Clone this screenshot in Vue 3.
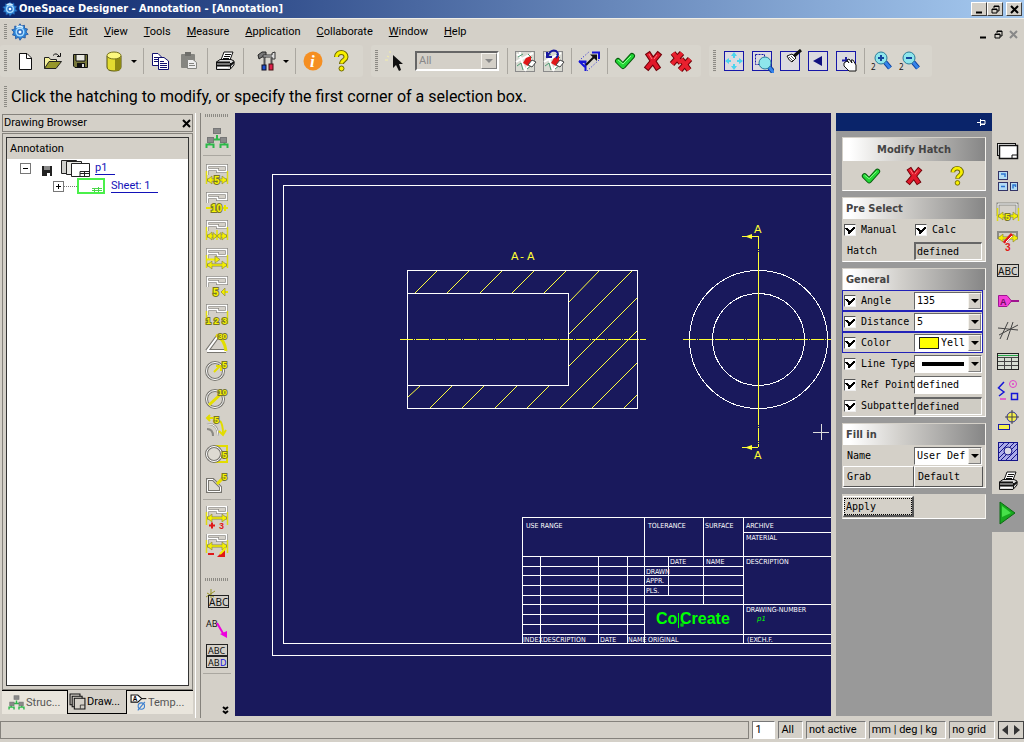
<script setup>
import { ref } from 'vue'

const dimBase = '<path d="M2.500 13V3.500H21.500V9.500H12.500V7.500H2.500" fill="none" stroke="#8b8983" stroke-width="3"/><path d="M2.500 13V3.500H21.500V9.500H12.500V7.500H2.500" fill="none" stroke="#fff" stroke-width="1.500"/>'
const arrows = (y) => `<path d="M2 ${y}H22" stroke="#8f8c3c" stroke-width="3"/><path d="M2 ${y}L7 ${y - 4}V${y + 4}ZM22 ${y}L17 ${y - 4}V${y + 4}Z" fill="#f4f000" stroke="#8f8c3c" stroke-width="0.700"/><path d="M3 ${y}H21" stroke="#f4f000" stroke-width="1.500"/>`
const posts = '<path d="M1.500 9V22M22.500 9V22" stroke="#dedb10" stroke-width="1.500"/>'
const num = (x, y, t, size = 10, fill = '#f8f400', edge = '#77752a') =>
  `<text x="${x}" y="${y}" font-family="Liberation Sans, sans-serif" font-weight="bold" font-size="${size}" fill="${fill}" stroke="${edge}" stroke-width="2" paint-order="stroke">${t}</text>`
const abc = (x, y, t, fill = '#111', size = 10) =>
  `<text x="${x}" y="${y}" font-family="Noto Sans, sans-serif" font-size="${size}" fill="${fill}">${t}</text>`

const treeIcon = '<path d="M12 9V13M4.500 18V13.500H19.500V18M1.500 22V18.500H8.500V22M15.500 22V18.500H22.500V22" fill="none" stroke="#2db84a" stroke-width="2"/><g fill="#8a8a8a" stroke="#777"><rect x="8.500" y="2.500" width="7" height="5"/><rect x="2.500" y="11.500" width="6" height="5"/><rect x="15.500" y="11.500" width="6" height="5"/></g>'
const checkIcon = '<path d="M5 12L10 17L19 7" fill="none" stroke="#075a0c" stroke-width="6" stroke-linecap="round" stroke-linejoin="round"/><path d="M5 12L10 17L19 7" fill="none" stroke="#22d636" stroke-width="4" stroke-linecap="round" stroke-linejoin="round"/><path d="M5 11L10 15L18 7" fill="none" stroke="#8dff8d" stroke-width="1"/>'
const crossIcon = '<path d="M8 6L16 18M17 6L7 18" stroke="#6e0008" stroke-width="6" stroke-linecap="square"/><path d="M8 6L16 18M17 6L7 18" stroke="#e0182a" stroke-width="4" stroke-linecap="square"/><path d="M8 5L11 10M16 6L13 10" stroke="#ff7a80"/>'
const helpIcon = '<path d="M7.500 8C7.500 2 17 2 17 8C17 11.500 12.500 11 12.500 15" fill="none" stroke="#6e6800" stroke-width="5"/><circle cx="12.500" cy="19.500" r="2.500" fill="#f8f000" stroke="#6e6800"/><path d="M7.500 8C7.500 2 17 2 17 8C17 11.500 12.500 11 12.500 14.500" fill="none" stroke="#f8f000" stroke-width="3"/>'
const printIcon = '<path d="M8 11L11 3H20L17 11Z" fill="#fff" stroke="#111"/><path d="M12 5.500H18M11 7.500H17M10 9.500H16" stroke="#111"/><path d="M3.500 13L7 10.500H18L21 12V16L17 20.500H3.500Z" fill="#ddd" stroke="#111"/><path d="M3 13.500H17M3 16.500H17L21 13" fill="none" stroke="#111" stroke-width="2"/><path d="M5 18.500H15" stroke="#fff"/><path d="M17.500 14V20" stroke="#111"/>'
const gearIcon = '<path d="M12 1L14 4L18 3L18 7L22 8L20 12L23 15L19 16L19 20L15 19L12 23L10 19L6 21L6 17L2 16L4 12L1 9L5 8L5 4L9 5Z" fill="#2e86d8" stroke="#1b4f9c"/><circle cx="12" cy="12" r="6" fill="#a8dcff"/><circle cx="12" cy="12" r="4" fill="#2b6fc4"/><circle cx="12" cy="12" r="2" fill="#fff"/><path d="M7 6Q11 3 16 6" fill="none" stroke="#d8f2ff" stroke-width="2"/>'
const mapBase = '<rect x="2.500" y="2.500" width="19" height="20" fill="#d9dad2" stroke="#8a8a8a"/><path d="M3 13L8 10L12 21M4 5L9 10L20 4M14 16H21M7 3V8M12 22L17 13" fill="none" stroke="#fff" stroke-width="2"/><path d="M5 8L10 5M4 17L8 14L10 21M15 5L19 9M14 20L19 16" fill="none" stroke="#4c9a72"/><path d="M10 14L13 9L18 7V12L15 17Z" fill="#e01818"/><path d="M15 16L19 11L23 13L19 18Z" fill="#fff" stroke="#444"/>'
const boxIcon = '<rect x="2.500" y="2.500" width="19" height="19" fill="#dcdbe0" stroke="#1616a8"/>'
const magnifier = (x, y) => `<path d="M${x + 4} ${y + 4}L${x + 9} ${y + 10}" stroke="#0c3f9c" stroke-width="5"/><path d="M${x + 4} ${y + 4}L${x + 9} ${y + 10}" stroke="#3584ea" stroke-width="3"/><circle cx="${x}" cy="${y}" r="6" fill="#8ee6ec" stroke="#2b7c9a"/>`

const icons = {
  gear: gearIcon, tree: treeIcon, check: checkIcon, cross: crossIcon, help: helpIcon, print: printIcon,
  newFile: '<path d="M6.500 4.500H14L18.500 9V20.500H6.500Z" fill="#fff" stroke="#111"/><path d="M13.500 4.500V9.500H18.500" fill="none" stroke="#111"/>',
  open: '<path d="M3.500 19.500V8.500H8L9.500 10.500H15.500V13" fill="#f5f19a" stroke="#222"/><path d="M3.500 19.500L8 12.500H20.500L15 19.500Z" fill="#96962a" stroke="#222"/><path d="M12 6.500Q15 3 18 7M19.500 4V7.500H16" fill="none" stroke="#111"/>',
  save: '<path d="M4.500 5.500H18.500V18.500H6L4.500 17Z" fill="#77773a" stroke="#111"/><path d="M7 5.500H16V12H7Z" fill="#e8e8e0" stroke="#111"/><path d="M8 14H16V19H8Z" fill="#111"/><path d="M13 15H15V18H13Z" fill="#ddd"/>',
  database: '<path d="M5 7V18Q5 22 12 22Q19 22 19 18V7Z" fill="#e2dc30" stroke="#55520c"/><path d="M13 9H19V18Q19 22 13 22Z" fill="#8e8a12"/><ellipse cx="12" cy="6.500" rx="7" ry="3.500" fill="#fbf77e" stroke="#77721c"/>',
  copy: '<path d="M3.500 4.500H9L12.500 8V16.500H3.500Z" fill="#fff" stroke="#111170"/><path d="M5 8.500H10M5 10.500H10M5 12.500H10" stroke="#111170"/><path d="M9.500 8.500H15L19.500 12V20.500H9.500Z" fill="#fff" stroke="#111170"/><path d="M11 12.500H15M11 14.500H18M11 16.500H18M11 18.500H18" stroke="#111170"/>',
  paste: '<rect x="4" y="5" width="14" height="14" rx="1" fill="#858580"/><rect x="8" y="3" width="6" height="4" fill="#6e6e6a"/><path d="M10.500 10.500H16L19.500 13.500V19.500H10.500Z" fill="#eee" stroke="#858580"/><path d="M12 14.500H17M12 16.500H18" stroke="#858580"/>',
  tools: '<path d="M4 6L8 3H12V8H8L5 10Z" fill="#777" stroke="#222"/><path d="M9 6H18V4L21 3V10H18V8H9Z" fill="#ddd" stroke="#333"/><path d="M10.500 8V16M17.500 9V15" stroke="#555" stroke-width="2"/><rect x="8" y="16" width="4" height="5" fill="#1d4fd0" stroke="#112"/><rect x="15" y="15" width="4" height="6" fill="#dd204c" stroke="#411"/>',
  info: '<circle cx="12" cy="12" r="9.500" fill="#f58f22"/><text x="9" y="18" font-family="Liberation Serif, serif" font-size="17" font-style="italic" font-weight="bold" fill="#fff">i</text>',
  cursor: '<path d="M9 6V19L12 16L15 22L17 21L15 15H19Z" fill="#111"/><path d="M3 7L5 8M6 2V4M1 11H4" stroke="#f4efaa"/>',
  mapRed: mapBase,
  mapUndo: mapBase + '<path d="M6 3V8H11M6.500 7Q10 0 15 2Q19 5 15 9" fill="none" stroke="#1818a0" stroke-width="2"/>',
  stretch: '<path d="M2 12.500H8.500V22M8 13L3 13M15 3.500H22V10" fill="none" stroke="#1515d8" stroke-width="2"/><path d="M2 12L8 18" stroke="#1515d8" stroke-width="2"/><path d="M9 16L18 7" stroke="#111" stroke-width="2"/><path d="M13 5.500H20V12Z" fill="#111"/><path d="M4 10L13 2M10 22L22 11" stroke="#1515d8" stroke-dasharray="1 2"/>',
  doubleCross: '<path d="M4 4L12 14M13 4L3 15M12 10L20 21M21 10L11 21" stroke="#6e0008" stroke-width="6"/><path d="M4 4L12 14M13 4L3 15M12 10L20 21M21 10L11 21" stroke="#e8202e" stroke-width="4"/>',
  fit: boxIcon + '<path d="M12 3L15 7H13V9H11V7H9ZM12 21L9 17H11V15H13V17H15ZM3 12L7 9V11H9V13H7V15ZM21 12L17 15V13H15V11H17V9Z" fill="#4cd4ee"/>',
  zoomBox: boxIcon + '<rect x="5.500" y="5.500" width="9" height="10" fill="none" stroke="#1616a8" stroke-dasharray="2 1"/>' + magnifier(15, 14),
  brush: boxIcon + '<path d="M23 1L15 8" stroke="#111" stroke-width="3"/><path d="M9 7L14 5L18 9L14 13Q11 12 9 7Z" fill="#fff" stroke="#111"/><path d="M11 8L15 12M13 7L16 10" stroke="#555"/>',
  previous: boxIcon + '<path d="M7 12L16 7V17Z" fill="#101080"/>',
  pan: boxIcon + '<path d="M8 11.500H16M12 8V16" stroke="#2020a0" stroke-width="2"/><path d="M10 14L13 12L15 14L13 11L15 10L18 14L17 11L19 11L22 16V22H15L10 17Z" fill="#fff" stroke="#111"/>',
  zoomIn: magnifier(11, 9) + '<path d="M8 9H14M11 6V12" stroke="#14449c" stroke-width="2"/>' + abc(1, 21, '2', '#111', 8),
  zoomOut: magnifier(11, 9) + '<path d="M8 9H14" stroke="#14449c" stroke-width="2"/>' + abc(1, 21, '2', '#111', 8),
  dim5: dimBase + posts + arrows(18) + num(9, 22, '5'),
  dim10: dimBase + '<path d="M1 18H7M18 18H23M20 15V21" stroke="#e8e400" stroke-width="2"/>' + num(6, 22, '10'),
  dimChain: dimBase + posts + arrows(18) + '<path d="M12 12V22" stroke="#e8e400" stroke-width="1.500"/><path d="M12 18L8 14.500V21.500ZM12 18L16 14.500V21.500Z" fill="#f4f000" stroke="#8f8c3c" stroke-width="0.700"/>',
  dimBaseLine: dimBase + posts + arrows(19) + '<path d="M2 13.500H13" stroke="#f4f000" stroke-width="2"/><path d="M15 13.500L10 10V17Z" fill="#f4f000" stroke="#8f8c3c" stroke-width="0.700"/>',
  dim5s: dimBase + '<path d="M16 18H23" stroke="#e8e400" stroke-width="2"/><path d="M16 18L20 14V22Z" fill="#f4f000" stroke="#8f8c3c" stroke-width="0.700"/>' + num(8, 22, '5'),
  dim123: dimBase + posts + num(1, 22, '1', 9) + num(9, 22, '2', 9) + num(17, 22, '3', 9),
  angle: '<path d="M2 21H21M2 21L13 6" stroke="#77756f" stroke-width="4"/><path d="M2 21H21M2 21L13 6" stroke="#fff" stroke-width="2"/><path d="M11 5Q20 10 21 21" fill="none" stroke="#e2de00" stroke-width="3"/>' + num(13, 9, '30', 8),
  radius: '<circle cx="10" cy="13" r="8.500" fill="none" stroke="#77756f" stroke-width="3"/><circle cx="10" cy="13" r="8.500" fill="none" stroke="#fff"/><path d="M9 14L15 8M11 8H16V13" stroke="#e5df00" stroke-width="2" fill="none"/>' + num(17, 10, '5', 9),
  diameter: '<circle cx="10" cy="13" r="8.500" fill="none" stroke="#77756f" stroke-width="3"/><circle cx="10" cy="13" r="8.500" fill="none" stroke="#fff"/><path d="M4 19L17 7" stroke="#e5df00" stroke-width="3"/>' + num(13, 9, '10', 8),
  arcDim: '<path d="M2 10Q13 9 13 22M2 15Q8 15 8 22" fill="none" stroke="#8b8983" stroke-width="2"/><path d="M2 10Q13 9 13 22" fill="none" stroke="#fff"/><path d="M2 4H8M5 1L2 4L5 7M15 7Q18 10 18 20M14 17L18 21L21 16" fill="none" stroke="#e2dc00" stroke-width="2"/>' + num(9, 9, '5', 9),
  tangent: '<path d="M8 4H22V20H8" fill="none" stroke="#e2dc00" stroke-width="2"/><circle cx="9" cy="12" r="7.500" fill="#dedbd2" stroke="#77756f" stroke-width="3"/><circle cx="9" cy="12" r="7.500" fill="none" stroke="#fff"/>' + num(17, 16, '5', 9),
  chamfer: '<path d="M2.500 9.500H8L15.500 17V21.500H2.500Z" fill="#dcd9d1" stroke="#77756f" stroke-width="3"/><path d="M2.500 9.500H8L15.500 17V21.500H2.500Z" fill="none" stroke="#fff"/><path d="M12 14L18 8" stroke="#e5df00" stroke-width="3"/>' + num(17, 10, '5', 9),
  dimPlus: '<g transform="translate(0 -3)">' + dimBase + posts + arrows(15) + '</g><path d="M4 19.500H10M7 16.500V22.500" stroke="#e01818" stroke-width="2"/>' + num(14, 23, '3', 9, '#e01818', '#d4d0c8'),
  dimMinus: '<g transform="translate(0 -3)">' + dimBase + posts + arrows(15) + '</g><path d="M3 20H9" stroke="#e01818" stroke-width="2"/><path d="M12 23L20 15V23Z" fill="#e01818"/><path d="M15 20L21 14" stroke="#f4f000" stroke-width="2"/>',
  abcNew: '<path d="M2 5L9 9M6 1V10M1 9L10 3" stroke="#99952a"/><rect x="3.500" y="7.500" width="20" height="12" fill="none" stroke="#222"/>' + abc(4, 18, 'ABC'),
  abArrow: abc(1, 11, 'AB', '#111', 9) + '<path d="M12 7L19 19" stroke="#ee00dd" stroke-width="2"/><path d="M15 18L22 15V22Z" fill="#ee00dd"/>',
  abcAbd: '<g fill="none" stroke="#222"><rect x="1.500" y="0.500" width="21" height="11"/><rect x="1.500" y="12.500" width="21" height="11"/></g>' + abc(3, 10, 'ABC', '#111', 9) + abc(3, 22, 'AB', '#111', 9) + abc(15, 22, 'D', '#1515e0', 9),
  sheets: '<rect x="1.500" y="4.500" width="18" height="12" fill="#fff" stroke="#111"/><path d="M3.500 6.500H21.500V19.500H3.500Z" fill="#fff" stroke="#111" stroke-width="1.500"/><path d="M16 19V16H21" fill="none" stroke="#111"/>',
  views: '<g fill="#b4dcf4" stroke="#333366"><rect x="2.500" y="2.500" width="9" height="8"/><rect x="2.500" y="13.500" width="9" height="8"/><rect x="14.500" y="13.500" width="7" height="8"/></g><path d="M5 5H9V8M5 17.500H9M17 19.500V16H19.500V18" fill="none" stroke="#2c74d0" stroke-width="1.500"/>',
  rowDim: '<path d="M2 17V5H21V17" fill="none" stroke="#8b8b86" stroke-width="3"/><path d="M2 17V5H21V17" fill="none" stroke="#fff"/>' + posts + arrows(17) + num(9, 21, '5', 9),
  rowDimEdit: '<path d="M2 10V3H21V10" fill="none" stroke="#8b8b86" stroke-width="2"/>' + arrows(9) + '<path d="M8 14L16 5" stroke="#e01818" stroke-width="3"/><path d="M10 13L16 7" stroke="#fff"/>' + num(9, 22, '3', 10, '#e01818', '#d4d0c8'),
  abc: '<rect x="1.500" y="5.500" width="21" height="12" fill="none" stroke="#222"/>' + abc(2, 16, 'ABC'),
  datum: '<path d="M2.500 6.500H11L15.500 12L11 17.500H2.500Z" fill="#f33fd8" stroke="#a01490"/><path d="M15 12H23" stroke="#a01490" stroke-width="2"/>' + num(4, 16, 'A', 9, '#701060', '#f33fd8'),
  lines: '<path d="M2 9L22 11M11 21L17 3M3 16L22 6M4 20L12 3" stroke="#444"/>',
  table: '<rect x="1.500" y="4.500" width="21" height="16" fill="#d7ddd3" stroke="#222"/><path d="M2 8.500H22M2 12.500H22M2 16.500H22M8.500 9V20M15.500 9V20" stroke="#444"/><path d="M2 6.500H22" stroke="#27a74a" stroke-width="1"/>',
  sketch: '<path d="M8 3L2.500 9L8 13L3 17" fill="none" stroke="#1616d8" stroke-width="1.500"/><circle cx="17" cy="5" r="3.500" fill="none" stroke="#e044c8"/><circle cx="17" cy="5" r="1" fill="#e044c8"/><rect x="15.500" y="14.500" width="6" height="6" fill="none" stroke="#1616d8" stroke-width="1.500"/><path d="M4 20H10" stroke="#e044c8" stroke-width="1.500"/>',
  target: '<circle cx="16" cy="8" r="5" fill="#f4ef4c" stroke="#2828a0"/><path d="M16 1V15M9 8H23" stroke="#444"/><rect x="2.500" y="15.500" width="11" height="5" fill="#f4ef4c" stroke="#1c1ca8"/>',
  hatch: '<rect x="2.500" y="3.500" width="19" height="18" fill="#aaaae8" stroke="#14148a"/><path d="M3 9L8 4M3 14L13 4M3 19L18 4M5 21L21 5M10 21L21 10M15 21L21 15" stroke="#14148a"/><circle cx="12" cy="12" r="4" fill="#d9d7e5" stroke="#14148a"/>',
  play: '<path d="M4 1L19 12L4 23Z" fill="#17a81e" stroke="#0b6b12"/><path d="M6 5L15 12L6 16Z" fill="#47e04a"/>',
  tabSheets: '<g fill="#d4d0c8" stroke="#111" stroke-width="1.500"><path d="M1.500 1.500H15.500V16.500H1.500Z"/><path d="M4.500 4.500H18.500V19.500H4.500Z"/><path d="M7.500 7.500H22.500V22.500H7.500Z"/></g><path d="M16 22V17H22" stroke="#111" fill="none"/>',
  tabTemplate: '<path d="M1.500 1.500H11L16.500 6.500L11 11.500H1.500Z" fill="#fff" stroke="#111" stroke-width="1.500"/><path d="M16 6.500H23" stroke="#111" stroke-width="1.500"/><text x="4" y="10" font-family="Liberation Sans, sans-serif" font-weight="bold" font-size="9">A</text><circle cx="16" cy="17" r="4.500" fill="none" stroke="#3a7fd0" stroke-width="1.500"/><path d="M11 23L21 11" stroke="#3a7fd0" stroke-width="1.500"/>'
}

const menus = ['File', 'Edit', 'View', 'Tools', 'Measure', 'Application', 'Collaborate', 'Window', 'Help']
const fileTools = [
  { icon: 'newFile', label: 'New' }, { icon: 'open', label: 'Open' }, { icon: 'save', label: 'Save' },
  { icon: 'database', label: 'Database', drop: true }, null,
  { icon: 'copy', label: 'Copy' }, { icon: 'paste', label: 'Paste' }, null,
  { icon: 'print', label: 'Print' }, null, { icon: 'tools', label: 'Options', drop: true }, null,
  { icon: 'info', label: 'Information' }, { icon: 'help', label: 'Help' }
]
const editTools = [
  null, { icon: 'mapRed', label: 'Erase' }, { icon: 'mapUndo', label: 'Undo' }, null,
  { icon: 'stretch', label: 'Stretch' }, null, { icon: 'check', label: 'Accept' },
  { icon: 'cross', label: 'Cancel' }, { icon: 'doubleCross', label: 'Cancel all' }
]
const viewTools = [
  { icon: 'fit', label: 'Fit' }, { icon: 'zoomBox', label: 'Zoom window' }, { icon: 'brush', label: 'Redraw' },
  { icon: 'previous', label: 'Previous view' }, { icon: 'pan', label: 'Pan' }, null,
  { icon: 'zoomIn', label: 'Zoom in' }, { icon: 'zoomOut', label: 'Zoom out' }
]
const sideTop = ['tree', null, 'dim5', 'dim10', 'dimChain', 'dimBaseLine', 'dim5s', 'dim123', 'angle', 'radius', 'diameter', 'arcDim', 'tangent', 'chamfer', null, 'dimPlus', 'dimMinus']
const sideBottom = ['abcNew', 'abArrow', 'abcAbd', null]
const railTools = ['sheets', 'views', 'rowDim', 'rowDimEdit', 'abc', 'datum', 'lines', 'table', 'sketch', 'target', 'hatch', 'print', 'play']
const general = [
  { id: 'angle', label: 'Angle', value: '135', kind: 'combo', hot: true },
  { id: 'distance', label: 'Distance', value: '5', kind: 'combo', hot: true },
  { id: 'color', label: 'Color', value: 'Yell', kind: 'combo', swatch: true, hot: true },
  { id: 'linetype', label: 'Line Type', value: '', kind: 'combo', line: true },
  { id: 'refpoint', label: 'Ref Point', value: 'defined', kind: 'text' },
  { id: 'subpattern', label: 'Subpattern', value: 'defined', kind: 'flat' }
]
const checks = ref(Object.fromEntries(general.map((g) => [g.id, true])))
const manual = ref(true)
const calc = ref(true)

const hatchTop = [[415, 437], [447, 469], [480, 502], [512, 534], [544, 566]]
const hatchBottom = [[430, 452], [462, 484], [495, 517], [527, 549]]
const hatchLines = [
  ...hatchTop.map(([a, b]) => [a, 293, b, 271]),
  ...hatchBottom.map(([a, b]) => [a, 408, b, 386]),
  [569, 302, 599, 271], [569, 334, 632, 271], [569, 366, 637, 298], [560, 408, 637, 331],
  [592, 408, 637, 363], [624, 408, 637, 395], [408, 397, 420, 386]
]
const blockText = [
  [526, 528, 'USE RANGE'], [648, 528, 'TOLERANCE'], [705, 528, 'SURFACE'], [746, 528, 'ARCHIVE'], [746, 540, 'MATERIAL'],
  [670, 564, 'DATE'], [706, 564, 'NAME'], [746, 564, 'DESCRIPTION'], [646, 574, 'DRAWN'], [646, 583, 'APPR.'], [646, 593, 'PLS.'],
  [746, 612, 'DRAWING-NUMBER'], [523, 642, 'INDEX'], [543, 642, 'DESCRIPTION'], [600, 642, 'DATE'], [628, 642, 'NAME'],
  [648, 642, 'ORIGINAL'], [747, 642, '(EXCH.F.']
]
const status = ['All', 'not active', 'mm | deg | kg', 'no grid']
</script>

<template>
  <div class="app">
    <header class="title">
      <svg class="ic16" viewBox="0 0 24 24" v-html="icons.gear"></svg>
      <h1>OneSpace Designer - Annotation - [Annotation]</h1>
      <div class="winbtns">
        <button aria-label="Minimize"><svg width="9" height="9"><path d="M1 7.500H7" stroke="#000" stroke-width="2" /></svg></button>
        <button aria-label="Restore"><svg width="9" height="9"><path d="M3 3V1H8V6H6M1 4H6V8H1ZM3 1.500H8M1 4.500H6" fill="none" stroke="#000" /></svg></button>
        <button class="close" aria-label="Close"><svg width="9" height="9"><path d="M1 1L8 8M8 1L1 8" stroke="#000" stroke-width="2" /></svg></button>
      </div>
    </header>

    <nav class="menu">
      <span class="grip"></span>
      <svg class="ic18" viewBox="0 0 24 24" v-html="icons.gear"></svg>
      <button v-for="m in menus" :key="m"><u>{{ m[0] }}</u>{{ m.slice(1) }}</button>
      <div class="docbtns">
        <button aria-label="Minimize document"><svg width="9" height="9"><path d="M1 7.500H7" stroke="#000" stroke-width="2" /></svg></button>
        <button aria-label="Restore document"><svg width="9" height="9"><path d="M3 3V1H8V6H6M1 4H6V8H1ZM3 1.500H8M1 4.500H6" fill="none" stroke="#000" /></svg></button>
        <button aria-label="Close document"><svg width="9" height="9"><path d="M1 1L8 8M8 1L1 8" stroke="#888" stroke-width="2" /></svg></button>
      </div>
    </nav>

    <div class="tools">
      <div class="bar">
        <span class="grip"></span>
        <template v-for="(t, i) in fileTools" :key="i">
          <button v-if="t" class="tool" :class="{ drop: t.drop }" :aria-label="t.label">
            <svg viewBox="0 0 24 24" v-html="icons[t.icon]"></svg><i v-if="t.drop" class="tri"></i>
          </button>
          <span v-else class="sep"></span>
        </template>
      </div>
      <div class="bar second">
        <span class="grip"></span>
        <button class="tool" aria-label="Select"><svg viewBox="0 0 24 24" v-html="icons.cursor"></svg></button>
        <div class="combo filter">
          <select aria-label="Selection filter" disabled><option>All</option></select>
          <span class="arrow"><i class="tri"></i></span>
        </div>
        <template v-for="(t, i) in editTools" :key="i">
          <button v-if="t" class="tool" :aria-label="t.label"><svg viewBox="0 0 24 24" v-html="icons[t.icon]"></svg></button>
          <span v-else class="sep"></span>
        </template>
      </div>
      <div class="bar">
        <span class="grip"></span>
        <template v-for="(t, i) in viewTools" :key="i">
          <button v-if="t" class="tool" :aria-label="t.label"><svg viewBox="0 0 24 24" v-html="icons[t.icon]"></svg></button>
          <span v-else class="sep"></span>
        </template>
      </div>
    </div>

    <div class="prompt"><span class="grip"></span><p>Click the hatching to modify, or specify the first corner of a selection box.</p></div>

    <main class="work">
      <aside class="browser">
        <div class="bhead"><h2>Drawing Browser</h2><button aria-label="Close browser"><svg width="9" height="9"><path d="M1 1L8 8M8 1L1 8" stroke="#000" stroke-width="2" /></svg></button></div>
        <div class="bframe">
          <div class="tree">
            <div class="thead">Annotation</div>
            <div class="trow">
              <button class="node" aria-label="Collapse">
                <svg width="11" height="11"><rect x="0.500" y="0.500" width="10" height="10" fill="#fff" stroke="#777" /><path d="M3 5.500H8" stroke="#000" /></svg>
              </button>
              <svg class="disk" width="10" height="10"><path d="M0 0H10V10H0Z" fill="#222" /><path d="M2 0H8V4H2Z" fill="#888" /><path d="M5 7H8V10H5Z" fill="#fff" /></svg>
              <svg class="stack" width="32" height="18"><g fill="#d0d0cc" stroke="#222"><path d="M1.500 1.500H16.500V14.500H1.500Z" /><path d="M6.500 2.500H21.500V15.500H6.500Z" fill="#e8e8e4" /><path d="M11.500 4.500H29.500V17.500H11.500Z" fill="#fff" /></g><path d="M20 17V12.500H29M20 14.500H29M24.500 12V17" stroke="#222" fill="none" /></svg>
              <a href="#p1">p1</a>
            </div>
            <div class="trow child">
              <button class="node" aria-label="Expand">
                <svg width="11" height="11"><rect x="0.500" y="0.500" width="10" height="10" fill="#fff" stroke="#777" /><path d="M3 5.500H8M5.500 3V8" stroke="#000" /></svg>
              </button>
              <i class="dots"></i>
              <svg width="28" height="17"><rect x="1" y="1" width="26" height="14" fill="#fff" stroke="#4af04a" stroke-width="2" /><path d="M15 12.500H25M15 10.500H25M17.500 10V14M21.500 9V14" stroke="#4ad84a" /></svg>
              <a href="#sheet1">Sheet: 1</a>
            </div>
          </div>
        </div>
        <div class="tabs">
          <button><svg viewBox="0 0 24 24" v-html="icons.tree"></svg>Struc...</button>
          <button class="on"><svg viewBox="0 0 24 24" v-html="icons.tabSheets"></svg>Draw...</button>
          <button><svg viewBox="0 0 24 24" v-html="icons.tabTemplate"></svg>Temp...</button>
        </div>
      </aside>

      <div class="side">
        <span class="hgrip"></span>
        <template v-for="(s, i) in sideTop" :key="i">
          <button v-if="s" class="vtool" :aria-label="s"><svg viewBox="0 0 24 24" v-html="icons[s]"></svg></button>
          <span v-else class="vsep"></span>
        </template>
        <span class="hgrip low"></span>
        <template v-for="(s, i) in sideBottom" :key="i">
          <button v-if="s" class="vtool" :aria-label="s"><svg viewBox="0 0 24 24" v-html="icons[s]"></svg></button>
          <span v-else class="vsep"></span>
        </template>
        <button class="more" aria-label="More tools"><svg width="7" height="9"><path d="M1 1L3.500 3L6 1M1 5L3.500 7L6 5" fill="none" stroke="#000" stroke-width="2" /></svg></button>
      </div>

      <div class="canvas">
        <svg width="100%" height="100%" role="img" aria-label="Section drawing">
          <g transform="translate(-235 -113)">
            <g fill="none" stroke="#fff" shape-rendering="crispEdges">
              <path d="M2000 174.500H272.500V655.500H2000M2000 185.500H283.500V643.500H2000" />
              <path d="M407.500 270.500H637.500V408.500H407.500ZM407.500 293.500H568.500V385.500H407.500" />
              <path d="M522.500 643V517.500H2000M743 532.500H2000M522 556.500H2000M522 566.500H743M522 575.500H743M522 585.500H743M522 595.500H743M522 604.500H2000M522 614.500H644M522 624.500H644M522 634.500H2000" />
              <path d="M540.500 556V643M598.500 556V643M627.500 556V643M644.500 517V643M668.500 556V595M703.500 517V604M743.500 517V643" />
            </g>
            <g stroke="#ffff3c" fill="none">
              <path v-for="(h, i) in hatchLines" :key="i" :d="`M${h[0]} ${h[1]}L${h[2]} ${h[3]}`" />
            </g>
            <g fill="none" stroke="#fff" shape-rendering="crispEdges"><circle cx="758.500" cy="339.500" r="69" /><circle cx="758.500" cy="339.500" r="46" /></g>
            <g stroke="#ff3" fill="none" shape-rendering="crispEdges">
              <path d="M400 339.500H646M683 339.500H831M758.500 236V447" stroke-dasharray="13 1 1 1" />
              <path d="M742 236.500H758M742 447.500H758M758.500 260V415" />
            </g>
            <path d="M745 236.500L752 234V239ZM745 447.500L752 445V450Z" fill="#ff3" />
            <path d="M813 432.500H829M821.500 424V440" stroke="#ddd" shape-rendering="crispEdges" />
            <g class="mark"><text x="511" y="260">A</text><text x="520" y="260">-</text><text x="527" y="260">A</text><text x="754" y="233">A</text><text x="754" y="459">A</text></g>
            <g class="cad"><text v-for="(t, i) in blockText" :key="i" :x="t[0]" :y="t[1]">{{ t[2] }}</text></g>
            <text class="brand" x="656" y="624">Co</text><text class="brand" x="680" y="624">Create</text>
            <path d="M678.500 613V628" stroke="#0f0" /><rect x="681" y="624" width="2" height="2" fill="none" stroke="#0f0" />
            <text class="part" x="757" y="621">p1</text>
          </g>
        </svg>
      </div>

      <section class="panel">
        <div class="phead"><button aria-label="Pin panel"><svg width="9" height="9"><path d="M0 4.500H3M3.500 1V8M3 2.500H8V6H3M3 6.500H8" stroke="#fff" fill="none" /></svg></button></div>
        <div class="group">
          <h3 class="center">Modify Hatch</h3>
          <div class="confirm">
            <button v-for="k in ['check', 'cross', 'help']" :key="k" :aria-label="k"><svg viewBox="0 0 24 24" v-html="icons[k]"></svg></button>
          </div>
        </div>
        <div class="group">
          <h3>Pre Select</h3>
          <div class="row">
            <label class="lab"><input v-model="manual" type="checkbox" />Manual</label>
            <label class="lab"><input v-model="calc" type="checkbox" />Calc</label>
          </div>
          <div class="row">
            <label class="lab plain" for="hatchstate">Hatch</label>
            <input id="hatchstate" class="txt flat" value="defined" />
          </div>
        </div>
        <div class="group">
          <h3>General</h3>
          <div v-for="g in general" :key="g.id" class="row" :class="{ hot: g.hot }">
            <label class="lab"><input v-model="checks[g.id]" type="checkbox" />{{ g.label }}</label>
            <div v-if="g.kind === 'combo'" class="combo">
              <i v-if="g.swatch" class="swatch"></i>
              <i v-if="g.line" class="lineprev"></i>
              <select :aria-label="g.label"><option>{{ g.value }}</option></select>
              <span class="arrow"><i class="tri"></i></span>
            </div>
            <input v-else class="txt" :class="g.kind" :aria-label="g.label" :value="g.value" />
          </div>
        </div>
        <div class="group">
          <h3>Fill in</h3>
          <div class="row">
            <label class="lab plain" for="fillname">Name</label>
            <div class="combo"><select id="fillname"><option>User Def</option></select><span class="arrow"><i class="tri"></i></span></div>
          </div>
          <div class="row"><button class="push">Grab</button><button class="push">Default</button></div>
        </div>
        <div class="group apply"><button class="push"><span>Apply</span></button></div>
      </section>

      <div class="rail">
        <button v-for="r in railTools" :key="r" :class="{ run: r === 'play' }" :aria-label="r"><svg viewBox="0 0 24 24" v-html="icons[r]"></svg></button>
      </div>
    </main>

    <footer class="status">
      <div class="cell grow"></div>
      <input class="cell num" aria-label="Layer" value="1" />
      <div v-for="s in status" :key="s" class="cell">{{ s }}</div>
      <div class="scroll">
        <button aria-label="Scroll left"><svg width="8" height="10"><path d="M7 0V10L1 5Z" fill="#333" /></svg></button>
        <button aria-label="Scroll right"><svg width="8" height="10"><path d="M1 0V10L7 5Z" fill="#333" /></svg></button>
      </div>
    </footer>
  </div>
</template>

<style>
html, body { background: #d4d0c8; overflow: hidden; }
</style>

<style scoped>
* { box-sizing: border-box; }
.app { height: 100vh; display: flex; flex-direction: column; background: #d4d0c8; color: #000; font: 11px/14px Roboto, "Noto Sans", sans-serif; }
button { border: 0; padding: 0; background: none; font: inherit; color: inherit; }
h1, h2, h3, p { margin: 0; font-size: inherit; font-weight: normal; }
svg { display: block; flex: none; }
.title { height: 18px; display: flex; align-items: center; gap: 1px; padding: 0 2px; background: linear-gradient(90deg, #0a246a, #a6caf0); color: #fff; }
.title h1 { flex: 1; font: bold 11px/16px "DejaVu Sans Condensed", "Noto Sans", sans-serif; white-space: nowrap; }
.ic16 { width: 16px; height: 16px; }
.ic18 { width: 18px; height: 18px; margin: 0 7px 0 4px; }
.winbtns { display: flex; }
.winbtns button { width: 16px; height: 14px; display: grid; place-items: center; background: #d4d0c8; border: 1px solid; border-color: #fff #404040 #404040 #fff; }
.winbtns .close { margin-left: 3px; }
.menu { height: 27px; display: flex; align-items: center; padding-left: 4px; border-top: 1px solid #efede6; }
.menu > button { margin-right: 16px; }
.docbtns { margin-left: auto; display: flex; gap: 6px; padding: 4px 6px 0 0; }
.grip { width: 3px; height: 22px; flex: none; background: repeating-linear-gradient(#8c8a84 0 1px, #d4d0c8 1px 2px); }
.menu .grip { height: 16px; }
.tools { height: 32px; display: flex; gap: 8px; }
.bar { display: flex; align-items: center; padding: 0 8px 0 4px; background: #d8d5cd; border-radius: 3px; }
.bar .grip { margin-right: 4px; }
.second { padding-right: 6px; }
.tool { width: 28px; height: 28px; display: flex; align-items: center; justify-content: center; }
.tool svg { width: 24px; height: 24px; }
.drop { width: 44px; gap: 5px; padding-left: 4px; }
.sep { width: 8px; height: 26px; flex: none; background: linear-gradient(90deg, transparent 4px, #aaa7a0 4px 5px, transparent 5px); }
.tri { width: 0; height: 0; border: 3px solid transparent; border-top-color: #000; border-bottom: 0; }
.combo { position: relative; display: flex; align-items: center; background: #fff; min-width: 0; border: 1px solid; border-color: #666 #fff #fff #666; }
.combo select { appearance: none; flex: 1; min-width: 0; width: 100%; height: 100%; border: 0; padding: 0 0 0 2px; background: transparent; color: #000; font: inherit; border-radius: 0; outline: 0; }
.arrow { width: 13px; align-self: stretch; flex: none; display: grid; place-items: center; background: #d4d0c8; border: 1px solid; border-color: #f5f3ee #808080 #808080 #f5f3ee; pointer-events: none; }
.arrow .tri { border-width: 4px 4px 0; }
.filter { width: 84px; height: 20px; margin: 0 4px 0 5px; background: #d4d0c8; border-width: 2px; }
.filter select { color: #888; opacity: 1; }
.filter .arrow .tri { border-top-color: #888; }
.filter .arrow { width: 16px; }
.prompt { height: 35px; display: flex; align-items: center; gap: 4px; padding: 4px 4px 0; font: 300 16px/22px Roboto, "Noto Sans", sans-serif; }
.prompt p { white-space: nowrap; }
.work { flex: 1; min-height: 0; display: grid; grid-template-columns: 196px 39px minmax(0, 1fr) 156px 32px; padding-top: 1px; }
.browser { display: flex; flex-direction: column; padding: 1px 2px 4px; border-right: 1px solid #fff; }
.bhead { height: 18px; display: flex; align-items: center; justify-content: space-between; padding: 0 1px 0 1px; border: 1px solid #85827c; flex: none; }
.bframe { flex: 1; margin-top: 1px; padding: 3px; border: 1px solid #85827c; display: flex; }
.tree { flex: 1; background: #fff; border: 1px solid #333; }
.thead { height: 21px; padding: 4px 3px 0; background: #d4d0c8; }
.trow { height: 18px; display: flex; align-items: center; padding-left: 13px; }
.trow .disk { margin: 6px 0 0 11px; }
.trow .stack { margin-left: 8px; }
.trow a { color: #1212b8; text-decoration: none; border-bottom: 1px solid #1212b8; line-height: 13px; margin-left: 3px; padding-right: 8px; }
.child { padding-left: 46px; }
.child a { margin-left: 6px; }
.dots { width: 13px; border-top: 1px dotted #777; }
.tabs { height: 24px; flex: none; display: grid; grid-template-columns: 65px 60px 1fr; }
.tabs button { display: flex; align-items: center; gap: 1px; background: #e9e5dc; border-top: 1px solid #000; color: #555; overflow: hidden; white-space: nowrap; padding-left: 3px; }
.tabs button:first-child { padding-left: 6px; }
.tabs svg { width: 17px; height: 17px; }
.tabs .on { background: #d4d0c8; color: #000; border: 1px solid #000; border-top: 0; padding-left: 1px; }
.side { display: flex; flex-direction: column; align-items: center; padding: 0 0 3px; margin: 0 3px 0 4px; border-left: 1px solid #85827c; }
.hgrip { width: 23px; height: 3px; margin: 1px 0 7px; flex: none; background: repeating-linear-gradient(90deg, #8c8a84 0 1px, #d4d0c8 1px 2px); }
.hgrip.low { margin: 18px 0 5px; }
.vtool { width: 28px; height: 28px; display: grid; place-items: center; flex: none; }
.vtool svg, .rail svg { width: 24px; height: 24px; }
.vsep { width: 28px; height: 8px; flex: none; background: linear-gradient(transparent 3px, #aaa7a0 3px 4px, transparent 4px); }
.more { margin: auto 0 0 18px; }
.canvas { background: #19195c; margin-right: 5px; min-width: 0; overflow: hidden; margin-bottom: 2px; }
.mark { fill: #ff3; font: 11px "DejaVu Sans", sans-serif; }
.cad { fill: #fff; font: 7px "DejaVu Sans Condensed", "DejaVu Sans", sans-serif; }
.brand { fill: #0f0; font: bold 16px "Liberation Sans", sans-serif; }
.part { fill: #0f0; font: italic 7px "DejaVu Sans", sans-serif; }
.panel { background: #999; display: flex; flex-direction: column; gap: 6px; margin-bottom: 2px; font: 10px/14px "DejaVu Sans Mono", "Liberation Mono", monospace; }
.phead { height: 18px; background: #0a246a; display: flex; justify-content: flex-end; align-items: center; padding-right: 6px; }
.group { margin: 0 6px; background: #d4d0c8; border: 1px solid; border-color: #d4d0c8 #f5f3ee #fff #d4d0c8; }
.group h3 { height: 21px; padding: 0 3px; font: bold 11px/21px "DejaVu Sans Condensed", "Noto Sans", sans-serif; color: #444; background: linear-gradient(90deg, #fff 5%, #d2d0cc 40%, #868686); white-space: nowrap; }
.group h3.center { text-align: center; height: 23px; line-height: 23px; }
.confirm { height: 29px; display: grid; grid-template-columns: 1fr 1fr 1fr; padding: 0 7px; place-items: center; }
.confirm svg { width: 22px; height: 22px; }
.row { height: 21px; display: grid; grid-template-columns: 71px 69px; }
.row.hot { outline: 1px solid #2222b8; outline-offset: -1px; margin-right: 2px; margin-left: -1px; padding-left: 1px; }
.lab { display: flex; align-items: center; gap: 5px; overflow: hidden; white-space: nowrap; padding-left: 1px; }
.lab input { appearance: none; width: 12px; height: 12px; margin: 0; flex: none; background: #fff; border: 1px solid; border-color: #555 #eee #eee #555; }
.lab input:checked { background: linear-gradient(45deg, transparent 4px, #000 4px 6px, transparent 6px) 0 3px / 5px 6px no-repeat, linear-gradient(135deg, transparent 4px, #000 4px 6px, transparent 6px) 3px 2px / 7px 7px no-repeat, #fff; }
.lab.plain { padding-left: 4px; }
.row .combo, .txt { margin: 2px 1px 1px 0; }
.txt { min-width: 0; width: 68px; border: 1px solid; border-color: #666 #fff #fff #666; padding: 0 2px; background: #fff; font: inherit; color: #000; border-radius: 0; }
.txt.flat { background: #cfccc4; border-width: 2px 1px 1px 2px; padding: 0 1px; }
.swatch { width: 20px; height: 12px; margin-left: 4px; flex: none; background: #ff0; border: 1px solid #222; }
.lineprev { width: 42px; height: 4px; margin-left: 7px; flex: none; background: #000; }
.push { text-align: left; padding: 0 3px; background: #d4d0c8; border: 1px solid; border-color: #fff #555 #555 #fff; }
.apply { height: 25px; padding-top: 1px; }
.apply .push { width: 71px; height: 21px; padding: 1px; border-right-width: 2px; border-bottom-width: 2px; }
.apply span { display: block; outline: 1px dotted #000; padding: 0 1px; line-height: 15px; }
.rail { display: flex; flex-direction: column; align-items: center; padding-top: 23px; }
.rail button { width: 32px; height: 30px; flex: none; display: grid; place-items: center; }
.rail .run { height: 38px; background: #999; margin-top: -2px; }
.status { height: 24px; display: flex; align-items: center; gap: 3px; padding-bottom: 1px; }
.cell { height: 18px; line-height: 16px; padding: 0 8px 0 2px; border: 1px solid; border-color: #777 #fff #fff #777; white-space: nowrap; }
.grow { flex: 1; border-color: #85827c; }
.num { width: 23px; background: #fff; font: inherit; border-radius: 0; }
.scroll { display: flex; border: 1px solid #444; height: 18px; }
.scroll button { width: 12px; display: grid; place-items: center; }
</style>
